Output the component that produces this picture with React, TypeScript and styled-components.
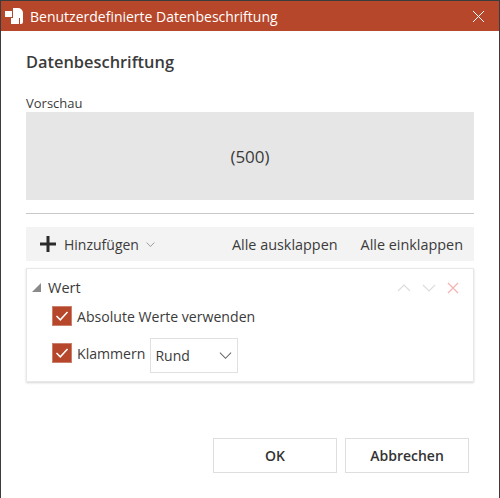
import styled, { createGlobalStyle } from "styled-components";

const GlobalStyle = createGlobalStyle`
  html, body {
    margin: 0;
    padding: 0;
    background: #fff;
  }
  * {
    box-sizing: border-box;
  }
`;

const Dialog = styled.div`
  width: 500px;
  height: 498px;
  display: flex;
  flex-direction: column;
  background: #fff;
  border: 1px solid #3c3c3c;
  border-bottom: none;
  overflow: hidden;
  font-family: "Open Sans", "Liberation Sans", sans-serif;
  color: #3b3b3b;
`;

const TitleBar = styled.div`
  height: 30px;
  flex: none;
  background: #b7472a;
  color: #fff;
  display: flex;
  align-items: center;
  padding: 0 14px 0 3px;
  font-size: 14px;
`;

const AppIcon = styled.svg`
  width: 20px;
  height: 20px;
  margin-right: 6px;
  flex: none;
`;

const TitleText = styled.span`
  flex: 1;
`;

const Body = styled.div`
  flex: 1;
  display: flex;
  flex-direction: column;
  padding: 20px 25px 25px;
`;

const Heading = styled.h1`
  margin: 0;
  font-size: 16.4px;
  font-weight: 600;
  line-height: 22px;
`;

const PreviewLabel = styled.div`
  margin-top: 21px;
  font-size: 13px;
  line-height: 18px;
`;

const Preview = styled.div`
  height: 88px;
  background: #e6e6e6;
  display: flex;
  align-items: center;
  justify-content: center;
  font-size: 17px;
`;

const Divider = styled.div`
  height: 1px;
  margin-top: 13px;
  background: #c8c8c8;
`;

const Toolbar = styled.div`
  height: 34px;
  margin-top: 13px;
  background: #f3f3f3;
  display: flex;
  align-items: center;
  padding: 0 11px 0 14px;
  font-size: 14.4px;
`;

const AddButton = styled.div`
  display: flex;
  align-items: center;
  flex: 1;
`;

const AddLabel = styled.span`
  margin: 0 7px 0 8px;
  font-size: 14px;
`;

const ToolbarLink = styled.span`
  margin-left: 23px;
`;

const Panel = styled.div`
  height: 114px;
  margin-top: 7px;
  padding: 0 14px 0 5px;
  border: 1px solid #e8e8e8;
  box-shadow: 0 1px 2px rgba(0, 0, 0, 0.16);
  background: #fff;
`;

const PanelHeader = styled.div`
  height: 37px;
  margin-bottom: -2px;
  display: flex;
  align-items: center;
  font-size: 14.5px;
`;

const PanelTitle = styled.span`
  flex: 1;
  margin-left: 7px;
`;

const PanelActions = styled.div`
  display: flex;
  align-items: center;
  gap: 11px;
`;

const OptionRow = styled.div<{ $height: number }>`
  height: ${(props) => props.$height}px;
  display: flex;
  align-items: center;
  padding-left: 20px;
  font-size: 14.1px;
`;

const CheckBox = styled.span`
  width: 20px;
  height: 20px;
  flex: none;
  margin-right: 5px;
  background: #b7472a;
  border: 1px solid #c9806d;
  display: flex;
  align-items: center;
  justify-content: center;
`;

const SelectBox = styled.div`
  width: 88px;
  height: 35px;
  margin: 5px 0 0 5px;
  padding: 0 5px 0 4px;
  border: 1px solid #e0e0e0;
  display: flex;
  align-items: center;
  justify-content: space-between;
  font-size: 14px;
`;

const Footer = styled.div`
  margin-top: auto;
  display: flex;
  justify-content: flex-end;
  gap: 8px;
  padding-right: 5px;
`;

const FooterButton = styled.button`
  width: 124px;
  height: 35px;
  padding: 0;
  background: #fff;
  border: 1px solid #dedede;
  font-family: inherit;
  font-size: 14px;
  font-weight: 600;
  color: #333;
`;

const Chevron = ({ up, color, size = 14 }: { up?: boolean; color: string; size?: number }) => (
  <svg width={size} height={size} viewBox="0 0 14 14" fill="none">
    <path d={up ? "M1 10l6-6 6 6" : "M1 4l6 6 6-6"} stroke={color} strokeWidth="1.1" />
  </svg>
);

const Check = () => (
  <svg width="14" height="12" viewBox="0 0 14 12" fill="none">
    <path d="M1.500 6l3.800 3.800L12.500 2" stroke="#fff" strokeWidth="1.5" />
  </svg>
);

export default function App() {
  return (
    <>
      <GlobalStyle />
      <Dialog>
        <TitleBar>
          <AppIcon viewBox="0 0 20 20">
            <path d="M9 2h5a5 5 0 0 1 5 5v9a2 2 0 0 1-2 2h-1v-6H9z" fill="#fff" />
            <rect x="1" y="5" width="7" height="6" fill="#fff" />
            <rect x="7" y="12" width="8" height="6" fill="#fff" />
          </AppIcon>
          <TitleText>Benutzerdefinierte Datenbeschriftung</TitleText>
          <svg width="13" height="13" viewBox="0 0 13 13" fill="none">
            <path d="M1 1l11 11M12 1L1 12" stroke="#fff" strokeWidth="1" />
          </svg>
        </TitleBar>
        <Body>
          <Heading>Datenbeschriftung</Heading>
          <PreviewLabel>Vorschau</PreviewLabel>
          <Preview>(500)</Preview>
          <Divider />
          <Toolbar>
            <AddButton>
              <svg width="16" height="16" viewBox="0 0 16 16">
                <path d="M6.500 0h3v6.500H16v3H9.500V16h-3V9.500H0v-3h6.500z" fill="#2b2b2b" />
              </svg>
              <AddLabel>Hinzufügen</AddLabel>
              <Chevron color="#777" size={9} />
            </AddButton>
            <ToolbarLink>Alle ausklappen</ToolbarLink>
            <ToolbarLink>Alle einklappen</ToolbarLink>
          </Toolbar>
          <Panel>
            <PanelHeader>
              <svg width="9" height="9" viewBox="0 0 9 9">
                <path d="M9 0v9H0z" fill="#8a8a8a" />
              </svg>
              <PanelTitle>Wert</PanelTitle>
              <PanelActions>
                <Chevron up color="#dcdcdc" />
                <Chevron color="#dcdcdc" />
                <svg width="12" height="12" viewBox="0 0 12 12" fill="none">
                  <path d="M1 1l10 10M11 1L1 11" stroke="#f5b5b5" strokeWidth="1.4" />
                </svg>
              </PanelActions>
            </PanelHeader>
            <OptionRow $height={24}>
              <CheckBox><Check /></CheckBox>
              Absolute Werte verwenden
            </OptionRow>
            <OptionRow $height={50}>
              <CheckBox><Check /></CheckBox>
              Klammern
              <SelectBox>
                Rund
                <Chevron color="#666" size={13} />
              </SelectBox>
            </OptionRow>
          </Panel>
          <Footer>
            <FooterButton>OK</FooterButton>
            <FooterButton>Abbrechen</FooterButton>
          </Footer>
        </Body>
      </Dialog>
    </>
  );
}
